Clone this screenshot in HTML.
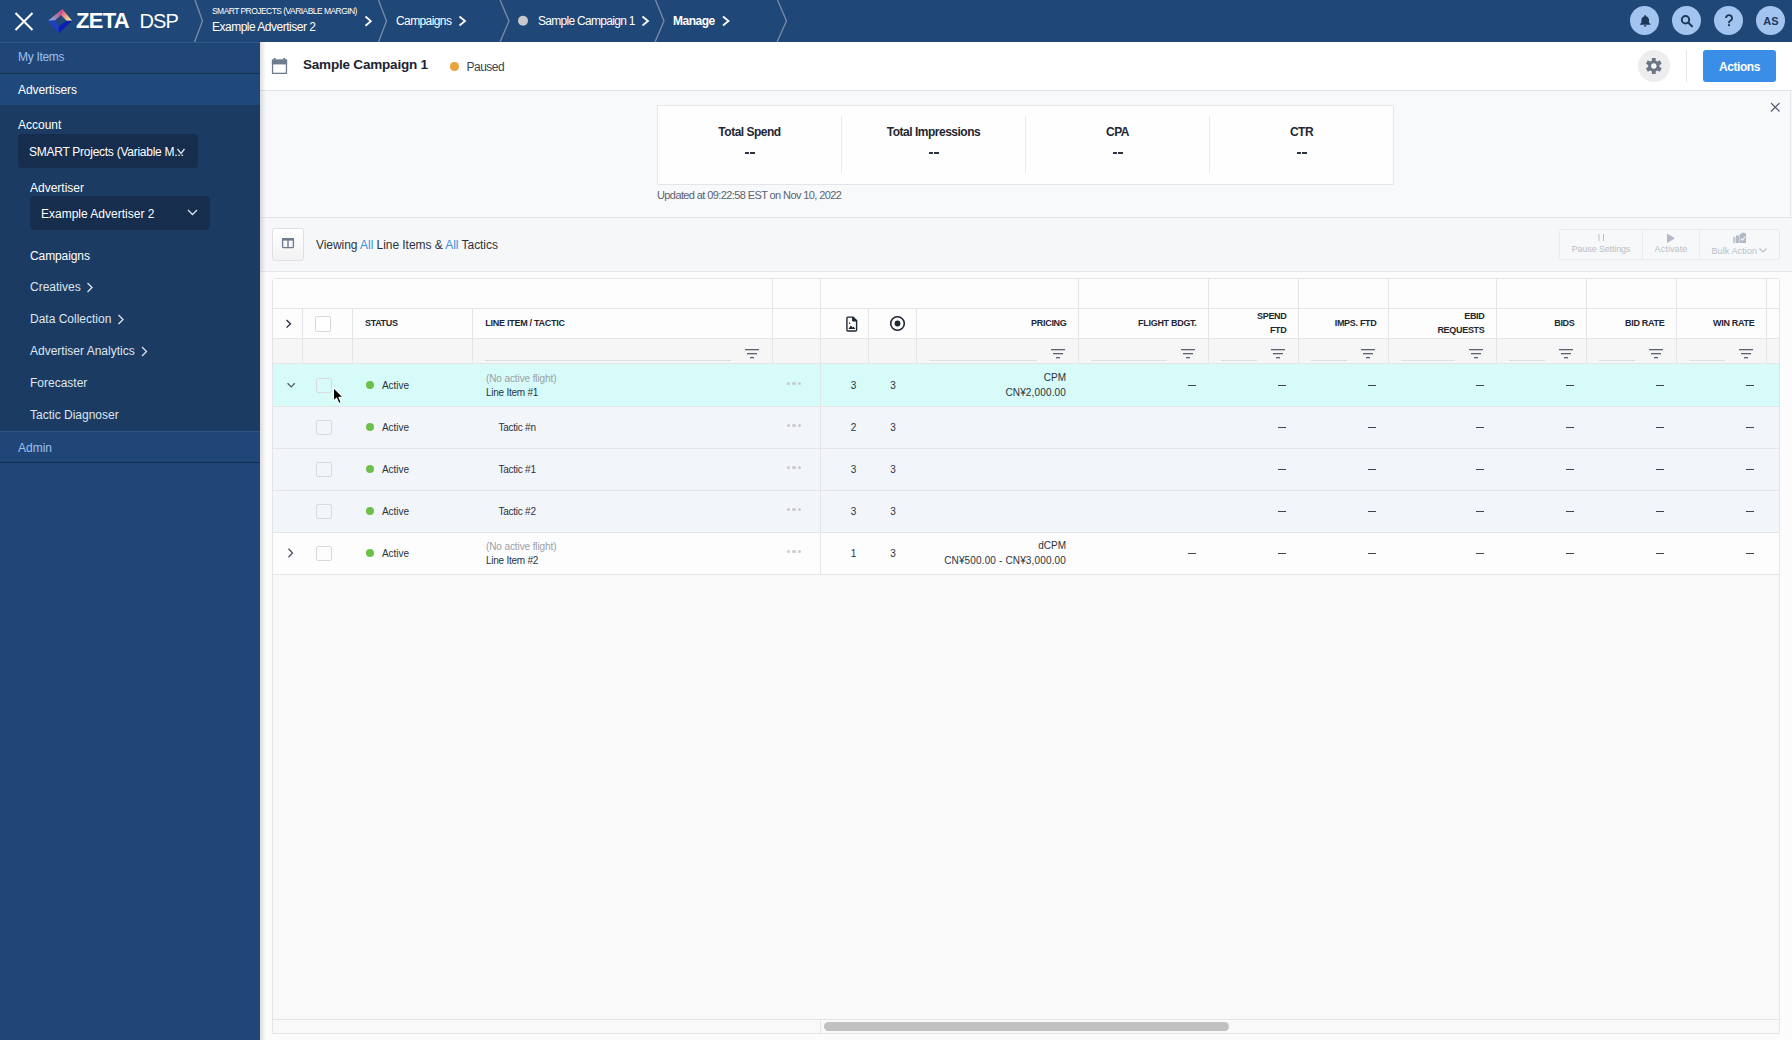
<!DOCTYPE html>
<html><head><meta charset="utf-8">
<style>
*{box-sizing:border-box;margin:0;padding:0}
html,body{width:1792px;height:1040px;overflow:hidden;background:#f8f8f8;font-family:"Liberation Sans",sans-serif;color:#1f2733}
.a{position:absolute;white-space:nowrap}
.t{position:absolute;white-space:nowrap;line-height:20px;height:20px}
#top{position:absolute;left:0;top:0;width:1792px;height:42px;background:#1f4777}
#side{position:absolute;left:0;top:42px;width:260px;height:998px;background:#1f4677}
.sb{color:#fff;font-size:12px}
.chev{position:absolute;width:6px;height:6px;border-right:1.6px solid #fff;border-top:1.6px solid #fff;transform:rotate(45deg)}
.tb{color:#fff;font-size:12px;letter-spacing:-0.5px}
.ic{position:absolute;top:6px;width:29px;height:29px;border-radius:50%;background:#a4c4f0}
</style></head><body>
<!-- ===== TOP BAR ===== -->
<div id="top"></div>
<svg class="a" style="left:0;top:0" width="800" height="42">
  <g stroke="#fff" stroke-width="2" fill="none"><path d="M15.5 13 L32.5 30 M32.5 13 L15.5 30"/></g>
  <defs>
    <linearGradient id="lgL" gradientUnits="userSpaceOnUse" x1="49" y1="20.5" x2="62" y2="10">
      <stop offset="0" stop-color="#86b6ea"/><stop offset="0.5" stop-color="#b077a8"/><stop offset="1" stop-color="#d9448a"/>
    </linearGradient>
    <linearGradient id="lgR" gradientUnits="userSpaceOnUse" x1="62" y1="10" x2="72" y2="20.7">
      <stop offset="0" stop-color="#d94a8a"/><stop offset="0.45" stop-color="#eb9a8a"/><stop offset="0.8" stop-color="#f2e08a"/><stop offset="1" stop-color="#f6f4e0"/>
    </linearGradient>
  </defs>
  <path d="M48.1 20.7 L62.3 8.9 L61 15.1 L54.8 20.4 Z" fill="url(#lgL)"/>
  <path d="M62.3 8.9 L72.1 20.7 L66.6 20.7 L61 15.1 Z" fill="url(#lgR)"/>
  <path d="M48.1 20.7 L54.8 20.4 L59 26.2 L58.7 33.4 Z" fill="#1f3ec2"/>
  <path d="M58.7 33.4 L59 26.2 L66.6 20.7 L72.1 20.7 Z" fill="#0c1fb0"/>
  <g stroke="#7689a6" stroke-width="1.4" fill="none">
    <path d="M195 0 L202.5 21 L194.5 42"/>
    <path d="M378.5 0 L386.5 21 L378.5 42"/>
    <path d="M500 0 L509 21 L500 42"/>
    <path d="M655.5 0 L664 21 L655 42"/>
    <path d="M777.5 0 L786.5 21 L777 42"/>
  </g>
  <g stroke="#fff" stroke-width="1.8" fill="none">
    <path d="M365.5 16.5 L370.8 21.2 L365.5 25.8"/>
    <path d="M459.5 16.5 L465 21 L459.5 25.5"/>
    <path d="M642.5 16.5 L648 21 L642.5 25.5"/>
    <path d="M723 16.5 L728.5 21 L723 25.5"/>
  </g>
  <circle cx="523" cy="20.8" r="5" fill="#c9c9c9"/>
</svg>
<div class="t" style="left:76px;top:10px;font-size:22px;font-weight:bold;color:#fff;line-height:21px;letter-spacing:-0.7px">ZETA</div>
<div class="t" style="left:139.5px;top:10.8px;font-size:20px;color:#fff;letter-spacing:-0.9px;line-height:21px">DSP</div>
<div class="t" style="left:212px;top:2.5px;font-size:8.5px;color:#fff;letter-spacing:-0.55px;line-height:16px">SMART PROJECTS (VARIABLE MARGIN)</div>
<div class="t tb" style="left:212px;top:17px">Example Advertiser 2</div>
<div class="t tb" style="left:396px;top:11px;letter-spacing:-0.6px">Campaigns</div>
<div class="t tb" style="left:538px;top:11px;letter-spacing:-0.7px">Sample Campaign 1</div>
<div class="t tb" style="left:673px;top:11px;font-weight:bold">Manage</div>
<div class="ic" style="left:1630px"></div>
<div class="ic" style="left:1672px"></div>
<div class="ic" style="left:1714px"></div>
<div class="ic" style="left:1756px"></div>
<svg class="a" style="left:1626px;top:0" width="166" height="42">
  <g fill="#1e385a">
    <path d="M17.8 25.3 a1.4 1.4 0 0 0 2.8 0 Z"/>
    <path d="M19.2 15 c-0.5 0 -0.8 0.35 -0.8 0.8 v0.4 c-1.9 0.45 -3 2 -3 4 v2.4 l-1.5 1.6 v0.5 h10.6 v-0.5 l-1.5 -1.6 v-2.4 c0 -2 -1.1 -3.55 -3 -4 v-0.4 c0 -0.45 -0.3 -0.8 -0.8 -0.8 Z"/>
  </g>
  <g stroke="#1e385a" stroke-width="2" fill="none">
    <circle cx="59.5" cy="19.8" r="3.7"/>
    <path d="M62.4 22.7 L66 26.2" stroke-linecap="round"/>
  </g>
</svg>
<svg class="a" style="left:1714px;top:6px" width="29" height="29"><g transform="translate(15,15.2)" fill="none" stroke="#1e385a" stroke-width="1.8"><path d="M-3 -3.1 a3 3 0 1 1 4.2 2.8 c-0.9 0.4 -1.2 0.9 -1.2 1.7 v0.7"/></g><circle cx="15" cy="19.2" r="1.1" fill="#1e385a"/></svg>
<div class="t" style="left:1763.3px;top:11.4px;font-size:11px;font-weight:bold;color:#1e385a">AS</div>

<!-- ===== SIDEBAR ===== -->
<div id="side"></div>
<div class="a" style="left:0;top:42px;width:260px;height:1px;background:#2f5a88"></div>
<div class="a" style="left:0;top:43px;width:260px;height:30px;background:#1f4677"></div>
<div class="a" style="left:0;top:73px;width:260px;height:1px;background:#17304f"></div>
<div class="a" style="left:0;top:74px;width:260px;height:31px;background:#1f497b"></div>
<div class="a" style="left:0;top:105px;width:260px;height:326px;background:#1b3b63"></div>
<div class="a" style="left:0;top:431px;width:260px;height:1px;background:#2c5584"></div>
<div class="a" style="left:0;top:462px;width:260px;height:1px;background:#132b4a"></div>
<div class="t sb" style="left:18px;top:47px;color:#9dc0ef;letter-spacing:-0.3px">My Items</div>
<div class="t sb" style="left:18px;top:80px;letter-spacing:-0.1px">Advertisers</div>
<div class="t sb" style="left:18px;top:115px">Account</div>
<div class="a" style="left:18px;top:134px;width:180px;height:34px;border-radius:4px;background:#162d4d"></div>
<div class="t sb" style="left:29px;top:141.5px;letter-spacing:-0.26px">SMART Projects (Variable M...</div>
<div class="t sb" style="left:30px;top:177.5px">Advertiser</div>
<div class="a" style="left:30px;top:196px;width:180px;height:34px;border-radius:4px;background:#162d4d"></div>
<div class="t sb" style="left:41px;top:203.5px">Example Advertiser 2</div>
<svg class="a" style="left:0;top:0" width="260" height="470">
  <g stroke="#dfe6ef" stroke-width="1.3" fill="none">
    <path d="M177.5 149 L181 153.5 L184.5 149"/>
    <path d="M188 210 L192.5 214.5 L197 210"/>
    <path d="M87.5 283 L92 287.5 L87.5 292"/>
    <path d="M118.5 315 L123 319.5 L118.5 324"/>
    <path d="M142 347 L146.5 351.5 L142 356"/>
  </g>
</svg>
<div class="t sb" style="left:30px;top:245.5px;letter-spacing:-0.1px;color:#fff">Campaigns</div>
<div class="t sb" style="left:30px;top:277px;color:#dde5ef">Creatives</div>
<div class="t sb" style="left:30px;top:309px;color:#dde5ef">Data Collection</div>
<div class="t sb" style="left:30px;top:341px;color:#dde5ef">Advertiser Analytics</div>
<div class="t sb" style="left:30px;top:373px;color:#dde5ef">Forecaster</div>
<div class="t sb" style="left:30px;top:405px;color:#dde5ef">Tactic Diagnoser</div>
<div class="t sb" style="left:18px;top:437.5px;color:#9dc0ef">Admin</div>

<!-- ===== MAIN ===== -->
<div class="a" style="left:260px;top:42px;width:1532px;height:48px;background:#fff"></div>
<div class="a" style="left:260px;top:90px;width:1532px;height:1px;background:#e2e3e6"></div>
<div class="a" style="left:260px;top:91px;width:1532px;height:126px;background:#f8f9fb"></div>
<div class="a" style="left:260px;top:217px;width:1532px;height:1px;background:#e2e3e6"></div>
<div class="a" style="left:260px;top:218px;width:1532px;height:53px;background:#f6f7f9"></div>
<div class="a" style="left:260px;top:271px;width:1532px;height:1px;background:#e6e7ea"></div>


<svg class="a" style="left:262px;top:44px" width="40" height="40">
  <g fill="#6f7b8e">
    <rect x="9.9" y="15.6" width="15.2" height="4.8"/>
    <rect x="11.8" y="14" width="1.8" height="2.5"/>
    <rect x="21.4" y="14" width="1.8" height="2.5"/>
  </g>
  <rect x="10.55" y="16.25" width="13.9" height="13.1" fill="none" stroke="#6f7b8e" stroke-width="1.3"/>
</svg>
<div class="t" style="left:303px;top:55px;font-size:13.5px;font-weight:bold;letter-spacing:-0.2px;color:#1b2330">Sample Campaign 1</div>
<div class="a" style="left:450px;top:62px;width:8.5px;height:8.5px;border-radius:50%;background:#e8a33d"></div>
<div class="t" style="left:466.5px;top:57px;font-size:12px;letter-spacing:-0.5px;color:#3a4350">Paused</div>


<!-- main generated -->
<div class="a" style="left:1638px;top:50px;width:32px;height:32px;background:#ededed;border-radius:50%"></div>
<svg class="a" style="left:1638px;top:50px" width="32" height="32" viewBox="0 0 32 32">
<g transform="translate(15.8,16)" fill="#6b7585">
<circle r="5.7"/>
<rect x="-1.9" y="-8" width="3.8" height="4.5"/>
<rect x="-1.9" y="-8" width="3.8" height="4.5" transform="rotate(60)"/>
<rect x="-1.9" y="-8" width="3.8" height="4.5" transform="rotate(120)"/>
<rect x="-1.9" y="-8" width="3.8" height="4.5" transform="rotate(180)"/>
<rect x="-1.9" y="-8" width="3.8" height="4.5" transform="rotate(240)"/>
<rect x="-1.9" y="-8" width="3.8" height="4.5" transform="rotate(300)"/>
<circle r="2.7" fill="#f9f9f9"/>
</g>
</svg>
<div class="a" style="left:1686px;top:50px;width:1px;height:32px;background:#e6e7ea;"></div>
<div class="a" style="left:1703px;top:50px;width:73px;height:32px;background:#3a8ee8;border-radius:3px"></div>
<div class="t" style="left:1539.5px;width:400px;text-align:center;top:57.13px;font-size:12px;font-weight:bold;color:#ffffff;letter-spacing:-0.45px;">Actions</div>
<div class="a" style="left:657px;top:105px;width:737px;height:80px;background:#fefefe;border:1px solid #e4e5e8;border-radius:1px"></div>
<div class="t" style="left:549.5px;width:400px;text-align:center;top:122.43px;font-size:12px;font-weight:bold;color:#1f2733;letter-spacing:-0.5px;">Total Spend</div>
<div class="a" style="left:744.5px;top:152px;width:4.5px;height:2px;background:#2c3440;"></div>
<div class="a" style="left:750.0px;top:152px;width:4.5px;height:2px;background:#2c3440;"></div>
<div class="t" style="left:733.5px;width:400px;text-align:center;top:122.43px;font-size:12px;font-weight:bold;color:#1f2733;letter-spacing:-0.5px;">Total Impressions</div>
<div class="a" style="left:928.5px;top:152px;width:4.5px;height:2px;background:#2c3440;"></div>
<div class="a" style="left:934.0px;top:152px;width:4.5px;height:2px;background:#2c3440;"></div>
<div class="a" style="left:841px;top:116px;width:1px;height:57px;background:#e8e9ec;"></div>
<div class="t" style="left:917.5px;width:400px;text-align:center;top:122.43px;font-size:12px;font-weight:bold;color:#1f2733;letter-spacing:-0.5px;">CPA</div>
<div class="a" style="left:1112.5px;top:152px;width:4.5px;height:2px;background:#2c3440;"></div>
<div class="a" style="left:1118.0px;top:152px;width:4.5px;height:2px;background:#2c3440;"></div>
<div class="a" style="left:1025px;top:116px;width:1px;height:57px;background:#e8e9ec;"></div>
<div class="t" style="left:1101.5px;width:400px;text-align:center;top:122.43px;font-size:12px;font-weight:bold;color:#1f2733;letter-spacing:-0.5px;">CTR</div>
<div class="a" style="left:1296.5px;top:152px;width:4.5px;height:2px;background:#2c3440;"></div>
<div class="a" style="left:1302.0px;top:152px;width:4.5px;height:2px;background:#2c3440;"></div>
<div class="a" style="left:1209px;top:116px;width:1px;height:57px;background:#e8e9ec;"></div>
<div class="t" style="left:657px;top:185.26px;font-size:11px;color:#5b6370;letter-spacing:-0.6px;">Updated at 09:22:58 EST on Nov 10, 2022</div>
<svg class="a" style="left:1766px;top:98px" width="18" height="18"><path d="M5 5 L13.5 13.5 M13.5 5 L5 13.5" stroke="#555b6a" stroke-width="1.15"/></svg>
<div class="a" style="left:1790px;top:91px;width:1px;height:126px;background:#e6e7ea;"></div>
<div class="a" style="left:272px;top:228px;width:32px;height:33px;background:linear-gradient(#ffffff,#f2f2f3);border:1px solid #dfe0e3;border-radius:3px"></div>
<svg class="a" style="left:272px;top:228px" width="32" height="33">
<rect x="10.6" y="10.6" width="10.8" height="9" rx="1.2" fill="none" stroke="#6f7b8e" stroke-width="1.4"/>
<rect x="10" y="10" width="12" height="2.6" fill="#6f7b8e"/>
<rect x="15.3" y="11" width="1.4" height="9" fill="#6f7b8e"/>
</svg>
<div class="t" style="left:316px;top:235.23px;font-size:12px;color:#2a3340;letter-spacing:-0.05px;">Viewing <span style="color:#3a8fe0">All</span> Line Items &amp; <span style="color:#3a8fe0">All</span> Tactics</div>
<div class="a" style="left:1559px;top:229px;width:221px;height:31px;background:#f7f8fa;border:1px solid #e9eaed;border-radius:3px"></div>
<div class="a" style="left:1642px;top:230px;width:1px;height:29px;background:#ebecef;"></div>
<div class="a" style="left:1699px;top:230px;width:1px;height:29px;background:#ebecef;"></div>
<svg class="a" style="left:1559px;top:229px" width="221" height="31">
<rect x="39.5" y="5" width="1" height="7" fill="#bcc2cb"/><rect x="44" y="5" width="1" height="7" fill="#bcc2cb"/>
<path d="M108 4.5 L116 9.2 L108 14 Z" fill="#b3bac5"/>
<g fill="#b3bac5"><rect x="174" y="8" width="2.6" height="6" fill="#c9ced6"/><rect x="177" y="6.5" width="3" height="7.5"/><path d="M180.5 5.5 L184 3.5 L187 4.5 L187 14 L180.5 14 Z"/><path d="M182 9.5 L183.6 11.2 L186 7.6" stroke="#f4f5f7" stroke-width="1.1" fill="none"/></g>
</svg>
<div class="t" style="left:1401px;width:400px;text-align:center;top:239.33px;font-size:9px;color:#b9bfc9;letter-spacing:-0.15px;">Pause Settings</div>
<div class="t" style="left:1471px;width:400px;text-align:center;top:239.33px;font-size:9px;color:#b9bfc9;letter-spacing:0.1px;">Activate</div>
<div class="t" style="left:1534.3px;width:400px;text-align:center;top:241.03px;font-size:9px;color:#b9bfc9;letter-spacing:0.1px;">Bulk Action</div>
<svg class="a" style="left:1756px;top:244px" width="14" height="12"><path d="M3.5 4.5 L7 8 L10.5 4.5" stroke="#b9bfc9" stroke-width="1.1" fill="none"/></svg>
<div class="a" style="left:260px;top:272px;width:1532px;height:768px;background:#fcfcfc;"></div>
<div class="a" style="left:260px;top:42px;width:6px;height:998px;background:linear-gradient(to right,rgba(0,0,0,0.13),rgba(0,0,0,0));"></div>
<div class="a" style="left:272px;top:278px;width:1508px;height:756px;background:#f9f9fa;border:1px solid #e4e5e9;border-radius:3px 3px 0 0"></div>
<div class="a" style="left:273px;top:279px;width:1506px;height:29px;background:#fdfdfd;"></div>
<div class="a" style="left:273px;top:309px;width:1506px;height:29px;background:#fdfdfd;"></div>
<div class="a" style="left:273px;top:339px;width:1506px;height:24px;background:#f6f6f7;"></div>
<div class="a" style="left:273px;top:363px;width:1506px;height:43px;background:#d6fbf8;"></div>
<div class="a" style="left:273px;top:406px;width:1506px;height:42px;background:#f2f5fa;"></div>
<div class="a" style="left:273px;top:448px;width:1506px;height:42px;background:#f2f5fa;"></div>
<div class="a" style="left:273px;top:490px;width:1506px;height:42px;background:#f2f5fa;"></div>
<div class="a" style="left:273px;top:532px;width:1506px;height:42px;background:#fdfdfd;"></div>
<div class="a" style="left:273px;top:308px;width:1506px;height:1px;background:#e4e5e9;"></div>
<div class="a" style="left:273px;top:338px;width:1506px;height:1px;background:#e4e5e9;"></div>
<div class="a" style="left:273px;top:363px;width:1506px;height:1px;background:#e4e5e9;"></div>
<div class="a" style="left:273px;top:406px;width:1506px;height:1px;background:#e4e5e9;"></div>
<div class="a" style="left:273px;top:448px;width:1506px;height:1px;background:#e4e5e9;"></div>
<div class="a" style="left:273px;top:490px;width:1506px;height:1px;background:#e4e5e9;"></div>
<div class="a" style="left:273px;top:532px;width:1506px;height:1px;background:#e4e5e9;"></div>
<div class="a" style="left:273px;top:574px;width:1506px;height:1px;background:#e4e5e9;"></div>
<div class="a" style="left:772px;top:279px;width:1px;height:29px;background:#e4e5e9;"></div>
<div class="a" style="left:820px;top:279px;width:1px;height:29px;background:#e4e5e9;"></div>
<div class="a" style="left:1078px;top:279px;width:1px;height:29px;background:#e4e5e9;"></div>
<div class="a" style="left:1208px;top:279px;width:1px;height:29px;background:#e4e5e9;"></div>
<div class="a" style="left:1298px;top:279px;width:1px;height:29px;background:#e4e5e9;"></div>
<div class="a" style="left:1388px;top:279px;width:1px;height:29px;background:#e4e5e9;"></div>
<div class="a" style="left:1496px;top:279px;width:1px;height:29px;background:#e4e5e9;"></div>
<div class="a" style="left:1586px;top:279px;width:1px;height:29px;background:#e4e5e9;"></div>
<div class="a" style="left:1676px;top:279px;width:1px;height:29px;background:#e4e5e9;"></div>
<div class="a" style="left:1766px;top:279px;width:1px;height:29px;background:#e4e5e9;"></div>
<div class="a" style="left:302px;top:309px;width:1px;height:54px;background:#e4e5e9;"></div>
<div class="a" style="left:352px;top:309px;width:1px;height:54px;background:#e4e5e9;"></div>
<div class="a" style="left:472px;top:309px;width:1px;height:54px;background:#e4e5e9;"></div>
<div class="a" style="left:772px;top:309px;width:1px;height:54px;background:#e4e5e9;"></div>
<div class="a" style="left:820px;top:309px;width:1px;height:54px;background:#e4e5e9;"></div>
<div class="a" style="left:868px;top:309px;width:1px;height:54px;background:#e4e5e9;"></div>
<div class="a" style="left:916px;top:309px;width:1px;height:54px;background:#e4e5e9;"></div>
<div class="a" style="left:1078px;top:309px;width:1px;height:54px;background:#e4e5e9;"></div>
<div class="a" style="left:1208px;top:309px;width:1px;height:54px;background:#e4e5e9;"></div>
<div class="a" style="left:1298px;top:309px;width:1px;height:54px;background:#e4e5e9;"></div>
<div class="a" style="left:1388px;top:309px;width:1px;height:54px;background:#e4e5e9;"></div>
<div class="a" style="left:1496px;top:309px;width:1px;height:54px;background:#e4e5e9;"></div>
<div class="a" style="left:1586px;top:309px;width:1px;height:54px;background:#e4e5e9;"></div>
<div class="a" style="left:1676px;top:309px;width:1px;height:54px;background:#e4e5e9;"></div>
<div class="a" style="left:1766px;top:309px;width:1px;height:54px;background:#e4e5e9;"></div>
<div class="a" style="left:820px;top:364px;width:1px;height:210px;background:#e4e5e9;"></div>
<div class="a" style="left:273px;top:1019px;width:1506px;height:1px;background:#e4e5e9;"></div>
<div class="a" style="left:273px;top:1020px;width:1506px;height:13px;background:#f9f9f9;"></div>
<div class="a" style="left:820px;top:1020px;width:1px;height:13px;background:#e4e5e9;"></div>
<div class="a" style="left:824px;top:1022px;width:405px;height:9px;background:#c1c1c1;border-radius:5px"></div>
<svg class="a" style="left:272px;top:300px" width="700" height="70">
<path d="M14.5 20 L18.5 23.8 L14.5 27.6" stroke="#1f2733" stroke-width="1.3" fill="none"/>
</svg>
<div class="a" style="left:315px;top:315.5px;width:16px;height:16px;background:#ffffff;border:1px solid #d6d8db;border-radius:2px"></div>
<div class="t" style="left:365px;top:313.23px;font-size:9px;font-weight:bold;color:#1f2733;letter-spacing:-0.35px;">STATUS</div>
<div class="t" style="left:485.3px;top:313.23px;font-size:9px;font-weight:bold;color:#1f2733;letter-spacing:-0.27px;">LINE ITEM / TACTIC</div>
<svg class="a" style="left:840px;top:310px" width="70" height="28">
<path d="M7.9 7.1 h5.2 l3.5 3.5 v9.4 a1 1 0 0 1 -1 1 h-7.7 a1 1 0 0 1 -1 -1 v-11.9 a1 1 0 0 1 1 -1z" fill="none" stroke="#1f2733" stroke-width="1.4"/>
<path d="M12.6 7.1 v3.9 h3.9 Z" fill="#1f2733" stroke="#1f2733" stroke-width="1"/>
<circle cx="9.6" cy="13.2" r="0.8" fill="#1f2733"/>
<path d="M8.3 19 L10.9 15.6 L12.5 17.4 L13.5 16.5 L15.3 19 Z" fill="#1f2733"/>
<circle cx="57.5" cy="13.5" r="6.8" fill="none" stroke="#1f2733" stroke-width="1.6"/>
<circle cx="57.5" cy="13.5" r="2.9" fill="#1f2733"/>
</svg>
<div class="t" style="left:666.5px;width:400px;text-align:right;top:313.23px;font-size:9px;font-weight:bold;color:#1f2733;letter-spacing:-0.3px;">PRICING</div>
<div class="t" style="left:796.5px;width:400px;text-align:right;top:313.23px;font-size:9px;font-weight:bold;color:#1f2733;letter-spacing:-0.3px;">FLIGHT BDGT.</div>
<div class="t" style="left:886.5px;width:400px;text-align:right;top:306.13px;font-size:9px;font-weight:bold;color:#1f2733;letter-spacing:-0.3px;">SPEND</div>
<div class="t" style="left:886.5px;width:400px;text-align:right;top:319.93px;font-size:9px;font-weight:bold;color:#1f2733;letter-spacing:-0.3px;">FTD</div>
<div class="t" style="left:976.5px;width:400px;text-align:right;top:313.23px;font-size:9px;font-weight:bold;color:#1f2733;letter-spacing:-0.3px;">IMPS. FTD</div>
<div class="t" style="left:1084.5px;width:400px;text-align:right;top:306.13px;font-size:9px;font-weight:bold;color:#1f2733;letter-spacing:-0.3px;">EBID</div>
<div class="t" style="left:1084.5px;width:400px;text-align:right;top:319.93px;font-size:9px;font-weight:bold;color:#1f2733;letter-spacing:-0.3px;">REQUESTS</div>
<div class="t" style="left:1174.5px;width:400px;text-align:right;top:313.23px;font-size:9px;font-weight:bold;color:#1f2733;letter-spacing:-0.3px;">BIDS</div>
<div class="t" style="left:1264.5px;width:400px;text-align:right;top:313.23px;font-size:9px;font-weight:bold;color:#1f2733;letter-spacing:-0.3px;">BID RATE</div>
<div class="t" style="left:1354.5px;width:400px;text-align:right;top:313.23px;font-size:9px;font-weight:bold;color:#1f2733;letter-spacing:-0.3px;">WIN RATE</div>
<svg class="a" style="left:743.5px;top:347px" width="16" height="13"><g fill="#5a6270"><rect x="1" y="2" width="14" height="1.3"/><rect x="3" y="6" width="10" height="1.3"/><rect x="6" y="10" width="4" height="1.3"/></g></svg>
<div class="a" style="left:485px;top:360px;width:245.5px;height:1.4px;background:#dfe0e3;"></div>
<svg class="a" style="left:1049.5px;top:347px" width="16" height="13"><g fill="#5a6270"><rect x="1" y="2" width="14" height="1.3"/><rect x="3" y="6" width="10" height="1.3"/><rect x="6" y="10" width="4" height="1.3"/></g></svg>
<div class="a" style="left:929px;top:360px;width:107.5px;height:1.4px;background:#dfe0e3;"></div>
<svg class="a" style="left:1179.5px;top:347px" width="16" height="13"><g fill="#5a6270"><rect x="1" y="2" width="14" height="1.3"/><rect x="3" y="6" width="10" height="1.3"/><rect x="6" y="10" width="4" height="1.3"/></g></svg>
<div class="a" style="left:1091px;top:360px;width:75.5px;height:1.4px;background:#dfe0e3;"></div>
<svg class="a" style="left:1269.5px;top:347px" width="16" height="13"><g fill="#5a6270"><rect x="1" y="2" width="14" height="1.3"/><rect x="3" y="6" width="10" height="1.3"/><rect x="6" y="10" width="4" height="1.3"/></g></svg>
<div class="a" style="left:1221px;top:360px;width:35.5px;height:1.4px;background:#dfe0e3;"></div>
<svg class="a" style="left:1359.5px;top:347px" width="16" height="13"><g fill="#5a6270"><rect x="1" y="2" width="14" height="1.3"/><rect x="3" y="6" width="10" height="1.3"/><rect x="6" y="10" width="4" height="1.3"/></g></svg>
<div class="a" style="left:1311px;top:360px;width:35.5px;height:1.4px;background:#dfe0e3;"></div>
<svg class="a" style="left:1467.5px;top:347px" width="16" height="13"><g fill="#5a6270"><rect x="1" y="2" width="14" height="1.3"/><rect x="3" y="6" width="10" height="1.3"/><rect x="6" y="10" width="4" height="1.3"/></g></svg>
<div class="a" style="left:1401px;top:360px;width:53.5px;height:1.4px;background:#dfe0e3;"></div>
<svg class="a" style="left:1557.5px;top:347px" width="16" height="13"><g fill="#5a6270"><rect x="1" y="2" width="14" height="1.3"/><rect x="3" y="6" width="10" height="1.3"/><rect x="6" y="10" width="4" height="1.3"/></g></svg>
<div class="a" style="left:1509px;top:360px;width:35.5px;height:1.4px;background:#dfe0e3;"></div>
<svg class="a" style="left:1647.5px;top:347px" width="16" height="13"><g fill="#5a6270"><rect x="1" y="2" width="14" height="1.3"/><rect x="3" y="6" width="10" height="1.3"/><rect x="6" y="10" width="4" height="1.3"/></g></svg>
<div class="a" style="left:1599px;top:360px;width:35.5px;height:1.4px;background:#dfe0e3;"></div>
<svg class="a" style="left:1737.5px;top:347px" width="16" height="13"><g fill="#5a6270"><rect x="1" y="2" width="14" height="1.3"/><rect x="3" y="6" width="10" height="1.3"/><rect x="6" y="10" width="4" height="1.3"/></g></svg>
<div class="a" style="left:1689px;top:360px;width:35.5px;height:1.4px;background:#dfe0e3;"></div>
<svg class="a" style="left:282px;top:375px" width="20" height="20"><path d="M5.6 8.3 L9.2 11.9 L12.8 8.3" stroke="#4e5a6c" stroke-width="1.3" fill="none"/></svg>
<div class="a" style="left:316px;top:377.5px;width:16px;height:15px;background:transparent;border:1px solid #d8dadd;border-radius:2px"></div>
<div class="a" style="left:366px;top:381.0px;width:8.4px;height:8.4px;background:#6cc04a;border-radius:50%"></div>
<div class="t" style="left:382px;top:376.39px;font-size:10px;color:#2a3340;letter-spacing:-0.05px;">Active</div>
<div class="t" style="left:486px;top:369.09px;font-size:10px;color:#9aa0a8;letter-spacing:-0.1px;">(No active flight)</div>
<div class="t" style="left:486px;top:382.80px;font-size:10px;color:#2a3340;letter-spacing:-0.25px;">Line Item #1</div>
<div class="a" style="left:786.9px;top:381.79999999999995px;width:3.2px;height:3.2px;background:#c9cbce;border-radius:50%"></div>
<div class="a" style="left:792.4px;top:381.79999999999995px;width:3.2px;height:3.2px;background:#c9cbce;border-radius:50%"></div>
<div class="a" style="left:797.9px;top:381.79999999999995px;width:3.2px;height:3.2px;background:#c9cbce;border-radius:50%"></div>
<div class="t" style="left:653.5px;width:400px;text-align:center;top:376.39px;font-size:10px;color:#2a3340;letter-spacing:0px;">3</div>
<div class="t" style="left:693px;width:400px;text-align:center;top:376.39px;font-size:10px;color:#2a3340;letter-spacing:0px;">3</div>
<div class="t" style="left:666px;width:400px;text-align:right;top:367.50px;font-size:10px;color:#2a3340;letter-spacing:0px;">CPM</div>
<div class="t" style="left:666px;width:400px;text-align:right;top:383.30px;font-size:10px;color:#2a3340;letter-spacing:0.15px;">CN¥2,000.00</div>
<div class="a" style="left:1188px;top:385px;width:8px;height:1px;background:#3d4553;"></div>
<div class="a" style="left:1278px;top:385px;width:8px;height:1px;background:#3d4553;"></div>
<div class="a" style="left:1368px;top:385px;width:8px;height:1px;background:#3d4553;"></div>
<div class="a" style="left:1476px;top:385px;width:8px;height:1px;background:#3d4553;"></div>
<div class="a" style="left:1566px;top:385px;width:8px;height:1px;background:#3d4553;"></div>
<div class="a" style="left:1656px;top:385px;width:8px;height:1px;background:#3d4553;"></div>
<div class="a" style="left:1746px;top:385px;width:8px;height:1px;background:#3d4553;"></div>
<div class="a" style="left:316px;top:419.5px;width:16px;height:15px;background:transparent;border:1px solid #d8dadd;border-radius:2px"></div>
<div class="a" style="left:366px;top:423.0px;width:8.4px;height:8.4px;background:#6cc04a;border-radius:50%"></div>
<div class="t" style="left:382px;top:418.39px;font-size:10px;color:#2a3340;letter-spacing:-0.05px;">Active</div>
<div class="t" style="left:498.5px;top:418.39px;font-size:10px;color:#2a3340;letter-spacing:-0.25px;">Tactic #n</div>
<div class="a" style="left:786.9px;top:423.79999999999995px;width:3.2px;height:3.2px;background:#c9cbce;border-radius:50%"></div>
<div class="a" style="left:792.4px;top:423.79999999999995px;width:3.2px;height:3.2px;background:#c9cbce;border-radius:50%"></div>
<div class="a" style="left:797.9px;top:423.79999999999995px;width:3.2px;height:3.2px;background:#c9cbce;border-radius:50%"></div>
<div class="t" style="left:653.5px;width:400px;text-align:center;top:418.39px;font-size:10px;color:#2a3340;letter-spacing:0px;">2</div>
<div class="t" style="left:693px;width:400px;text-align:center;top:418.39px;font-size:10px;color:#2a3340;letter-spacing:0px;">3</div>
<div class="a" style="left:1278px;top:427px;width:8px;height:1px;background:#3d4553;"></div>
<div class="a" style="left:1368px;top:427px;width:8px;height:1px;background:#3d4553;"></div>
<div class="a" style="left:1476px;top:427px;width:8px;height:1px;background:#3d4553;"></div>
<div class="a" style="left:1566px;top:427px;width:8px;height:1px;background:#3d4553;"></div>
<div class="a" style="left:1656px;top:427px;width:8px;height:1px;background:#3d4553;"></div>
<div class="a" style="left:1746px;top:427px;width:8px;height:1px;background:#3d4553;"></div>
<div class="a" style="left:316px;top:461.5px;width:16px;height:15px;background:transparent;border:1px solid #d8dadd;border-radius:2px"></div>
<div class="a" style="left:366px;top:465.0px;width:8.4px;height:8.4px;background:#6cc04a;border-radius:50%"></div>
<div class="t" style="left:382px;top:460.39px;font-size:10px;color:#2a3340;letter-spacing:-0.05px;">Active</div>
<div class="t" style="left:498.5px;top:460.39px;font-size:10px;color:#2a3340;letter-spacing:-0.25px;">Tactic #1</div>
<div class="a" style="left:786.9px;top:465.79999999999995px;width:3.2px;height:3.2px;background:#c9cbce;border-radius:50%"></div>
<div class="a" style="left:792.4px;top:465.79999999999995px;width:3.2px;height:3.2px;background:#c9cbce;border-radius:50%"></div>
<div class="a" style="left:797.9px;top:465.79999999999995px;width:3.2px;height:3.2px;background:#c9cbce;border-radius:50%"></div>
<div class="t" style="left:653.5px;width:400px;text-align:center;top:460.39px;font-size:10px;color:#2a3340;letter-spacing:0px;">3</div>
<div class="t" style="left:693px;width:400px;text-align:center;top:460.39px;font-size:10px;color:#2a3340;letter-spacing:0px;">3</div>
<div class="a" style="left:1278px;top:469px;width:8px;height:1px;background:#3d4553;"></div>
<div class="a" style="left:1368px;top:469px;width:8px;height:1px;background:#3d4553;"></div>
<div class="a" style="left:1476px;top:469px;width:8px;height:1px;background:#3d4553;"></div>
<div class="a" style="left:1566px;top:469px;width:8px;height:1px;background:#3d4553;"></div>
<div class="a" style="left:1656px;top:469px;width:8px;height:1px;background:#3d4553;"></div>
<div class="a" style="left:1746px;top:469px;width:8px;height:1px;background:#3d4553;"></div>
<div class="a" style="left:316px;top:503.5px;width:16px;height:15px;background:transparent;border:1px solid #d8dadd;border-radius:2px"></div>
<div class="a" style="left:366px;top:507.0px;width:8.4px;height:8.4px;background:#6cc04a;border-radius:50%"></div>
<div class="t" style="left:382px;top:502.39px;font-size:10px;color:#2a3340;letter-spacing:-0.05px;">Active</div>
<div class="t" style="left:498.5px;top:502.39px;font-size:10px;color:#2a3340;letter-spacing:-0.25px;">Tactic #2</div>
<div class="a" style="left:786.9px;top:507.79999999999995px;width:3.2px;height:3.2px;background:#c9cbce;border-radius:50%"></div>
<div class="a" style="left:792.4px;top:507.79999999999995px;width:3.2px;height:3.2px;background:#c9cbce;border-radius:50%"></div>
<div class="a" style="left:797.9px;top:507.79999999999995px;width:3.2px;height:3.2px;background:#c9cbce;border-radius:50%"></div>
<div class="t" style="left:653.5px;width:400px;text-align:center;top:502.39px;font-size:10px;color:#2a3340;letter-spacing:0px;">3</div>
<div class="t" style="left:693px;width:400px;text-align:center;top:502.39px;font-size:10px;color:#2a3340;letter-spacing:0px;">3</div>
<div class="a" style="left:1278px;top:511px;width:8px;height:1px;background:#3d4553;"></div>
<div class="a" style="left:1368px;top:511px;width:8px;height:1px;background:#3d4553;"></div>
<div class="a" style="left:1476px;top:511px;width:8px;height:1px;background:#3d4553;"></div>
<div class="a" style="left:1566px;top:511px;width:8px;height:1px;background:#3d4553;"></div>
<div class="a" style="left:1656px;top:511px;width:8px;height:1px;background:#3d4553;"></div>
<div class="a" style="left:1746px;top:511px;width:8px;height:1px;background:#3d4553;"></div>
<svg class="a" style="left:280px;top:543px" width="20" height="20"><path d="M8.5 5.7 L12.5 10 L8.5 14.3" stroke="#4a5566" stroke-width="1.3" fill="none"/></svg>
<div class="a" style="left:316px;top:545.5px;width:16px;height:15px;background:transparent;border:1px solid #d8dadd;border-radius:2px"></div>
<div class="a" style="left:366px;top:549.0px;width:8.4px;height:8.4px;background:#6cc04a;border-radius:50%"></div>
<div class="t" style="left:382px;top:544.40px;font-size:10px;color:#2a3340;letter-spacing:-0.05px;">Active</div>
<div class="t" style="left:486px;top:537.10px;font-size:10px;color:#9aa0a8;letter-spacing:-0.1px;">(No active flight)</div>
<div class="t" style="left:486px;top:550.80px;font-size:10px;color:#2a3340;letter-spacing:-0.25px;">Line Item #2</div>
<div class="a" style="left:786.9px;top:549.8px;width:3.2px;height:3.2px;background:#c9cbce;border-radius:50%"></div>
<div class="a" style="left:792.4px;top:549.8px;width:3.2px;height:3.2px;background:#c9cbce;border-radius:50%"></div>
<div class="a" style="left:797.9px;top:549.8px;width:3.2px;height:3.2px;background:#c9cbce;border-radius:50%"></div>
<div class="t" style="left:653.5px;width:400px;text-align:center;top:544.40px;font-size:10px;color:#2a3340;letter-spacing:0px;">1</div>
<div class="t" style="left:693px;width:400px;text-align:center;top:544.40px;font-size:10px;color:#2a3340;letter-spacing:0px;">3</div>
<div class="t" style="left:666px;width:400px;text-align:right;top:535.50px;font-size:10px;color:#2a3340;letter-spacing:0px;">dCPM</div>
<div class="t" style="left:666px;width:400px;text-align:right;top:551.30px;font-size:10px;color:#2a3340;letter-spacing:0.15px;">CN¥500.00 - CN¥3,000.00</div>
<div class="a" style="left:1188px;top:553px;width:8px;height:1px;background:#3d4553;"></div>
<div class="a" style="left:1278px;top:553px;width:8px;height:1px;background:#3d4553;"></div>
<div class="a" style="left:1368px;top:553px;width:8px;height:1px;background:#3d4553;"></div>
<div class="a" style="left:1476px;top:553px;width:8px;height:1px;background:#3d4553;"></div>
<div class="a" style="left:1566px;top:553px;width:8px;height:1px;background:#3d4553;"></div>
<div class="a" style="left:1656px;top:553px;width:8px;height:1px;background:#3d4553;"></div>
<div class="a" style="left:1746px;top:553px;width:8px;height:1px;background:#3d4553;"></div>
<svg class="a" style="left:332px;top:386px" width="14" height="20">
<path d="M1.5 1.5 L1.5 15 L4.6 12.2 L7 17.6 L9.2 16.6 L6.9 11.4 L11 11.2 Z" fill="#000" stroke="#fff" stroke-width="1.1" stroke-linejoin="round"/>
</svg>
</body></html>
